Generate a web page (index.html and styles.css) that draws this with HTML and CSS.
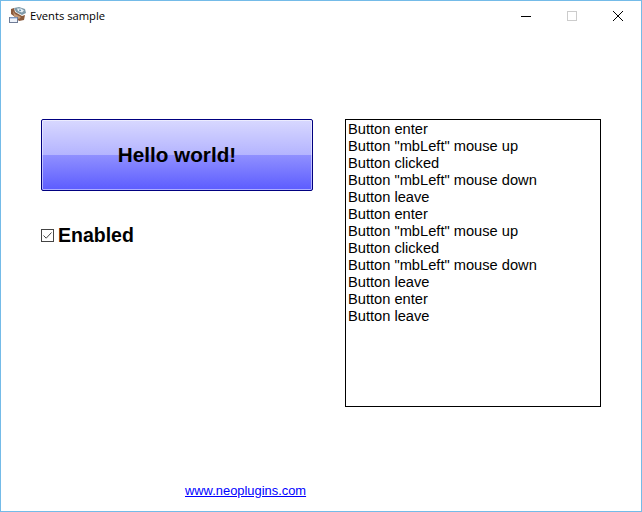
FILE: index.html
```html
<!DOCTYPE html>
<html lang="en">
<head>
<meta charset="utf-8">
<title>Events sample</title>
<link rel="stylesheet" href="styles.css">
</head>
<body>
<div class="window">
  <header class="titlebar">
    <svg class="app-icon" width="18" height="16" viewBox="0 0 18 16">
      <path d="M2 2 L5 1 L6 5 L13 9 L16 8 L15 13 L10 14 L6 10 L2 7 Z" fill="#8a5a3c"/>
      <path d="M4 4 L6 7 L12 10 L10 12 L5 9 Z" fill="#c49a78"/>
      <path d="M5 1 L10 0 L16 2 L17 6 L13 8 L7 5 Z" fill="#7f99a8"/>
      <path d="M8 1.5 L12 1.5 L15 3.5 L13 5.5 L9 4 Z" fill="#e6f0f6"/>
      <path d="M10 2.5 L12 2.8 L12 4 L10 3.8 Z" fill="#5f8fb0"/>
      <rect x="0.5" y="10.5" width="8" height="5" fill="#eef3fb" stroke="#6f7c96"/>
      <path d="M1 11 H8" stroke="#8fb0e0"/>
    </svg>
    <span class="title">Events sample</span>
    <div class="controls">
      <svg class="ctl" width="46" height="30" viewBox="0 0 46 30"><path d="M18 15.5 H28" stroke="#000" fill="none"/></svg>
      <svg class="ctl" width="46" height="30" viewBox="0 0 46 30"><rect x="18.5" y="10.5" width="9" height="9" stroke="#ccc" fill="none"/></svg>
      <svg class="ctl" width="46" height="30" viewBox="0 0 46 30"><path d="M18 10 L28 20 M28 10 L18 20" stroke="#000" fill="none"/></svg>
    </div>
  </header>
  <main class="client">
    <div class="panels">
      <section class="left">
        <button class="hello" type="button">Hello world!</button>
        <label class="enabled">
          <svg class="check" width="13" height="13" viewBox="0 0 13 13">
            <rect x="0.5" y="0.5" width="12" height="12" fill="#fff" stroke="#444"/>
            <path d="M2.5 6.5 L5.2 9.2 L10.5 3.5" fill="none" stroke="#444"/>
          </svg>
          <span>Enabled</span>
        </label>
      </section>
      <ul class="log">
        <li>Button enter</li>
        <li>Button "mbLeft" mouse up</li>
        <li>Button clicked</li>
        <li>Button "mbLeft" mouse down</li>
        <li>Button leave</li>
        <li>Button enter</li>
        <li>Button "mbLeft" mouse up</li>
        <li>Button clicked</li>
        <li>Button "mbLeft" mouse down</li>
        <li>Button leave</li>
        <li>Button enter</li>
        <li>Button leave</li>
      </ul>
    </div>
    <footer class="foot"><a class="site" href="#">www.neoplugins.com</a></footer>
  </main>
</div>
</body>
</html>
```

FILE: styles.css
```css
* { box-sizing: border-box; }
html, body { margin: 0; padding: 0; background: #fff; }
.window {
  width: 642px;
  height: 512px;
  border: 1px solid #74bbe8;
  display: flex;
  flex-direction: column;
  overflow: hidden;
  background: #fff;
}
.titlebar {
  height: 30px;
  flex: none;
  display: flex;
  align-items: center;
  padding-left: 8px;
  font: 11.2px "Open Sans", "Noto Sans", sans-serif;
  color: #000;
}
.app-icon { flex: none; margin-top: -2px; }
.title { margin-left: 3px; margin-top: -1px; }
.controls { margin-left: auto; display: flex; }
.ctl { display: block; margin-top: -1px; }
.client {
  flex: 1;
  display: flex;
  flex-direction: column;
  padding: 88px 40px 0;
}
.panels { display: flex; gap: 32px; align-items: flex-start; }
.left { width: 272px; flex: none; }
.hello {
  display: block;
  width: 272px;
  height: 72px;
  padding: 0;
  border: 1px solid #000080;
  border-radius: 2px;
  box-shadow: inset 0 0 0 1px rgba(255,255,255,.5);
  background: linear-gradient(#d8d8ff 0%, #b4b4ff 50%, #9090ff 50%, #5c5cff 100%);
  font: bold 20.7px "Liberation Sans", Arial, sans-serif;
  color: #000;
}
.enabled {
  display: flex;
  align-items: center;
  gap: 4px;
  margin-top: 32px;
  font: bold 19.5px/24px "Liberation Sans", Arial, sans-serif;
}
.check { flex: none; }
.log {
  list-style: none;
  margin: 0;
  padding: 1px 2px;
  width: 256px;
  height: 288px;
  border: 1px solid #000;
  font: 14.67px/17px "Liberation Sans", Arial, sans-serif;
  color: #000;
}
.foot {
  margin-top: auto;
  padding: 0 0 12px 144px;
  line-height: 16px;
}
.site {
  font: 12.9px/16px "Liberation Sans", Arial, sans-serif;
  color: #0000ff;
}
```
